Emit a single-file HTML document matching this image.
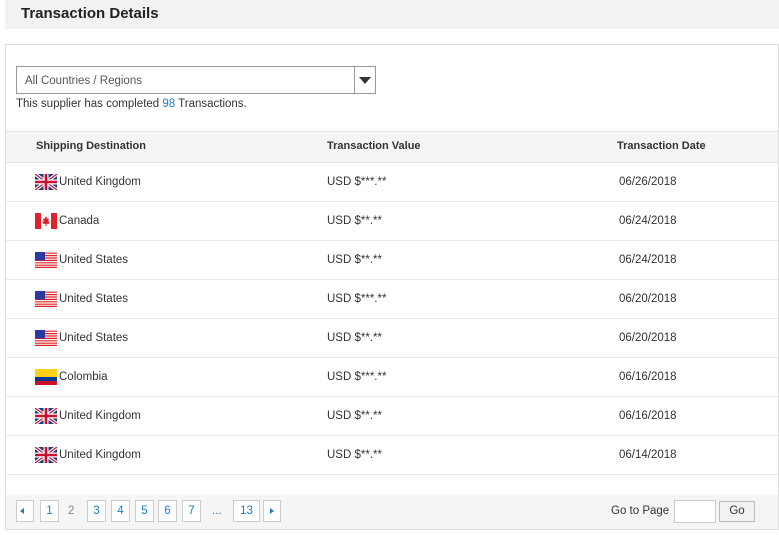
<!DOCTYPE html>
<html><head><meta charset="utf-8"><style>
*{box-sizing:border-box;margin:0;padding:0}
body{width:779px;height:535px;background:#fff;font-family:"Liberation Sans",Arial,sans-serif;font-size:11.5px;line-height:16px;color:#333;position:relative;overflow:hidden}
.top{position:absolute;left:5px;top:0;width:774px;height:29px;background:#f2f2f2}
.top h2{position:absolute;left:16px;top:5px;font-size:15px;line-height:18px;font-weight:bold;color:#222}
.panel{position:absolute;left:5px;top:44px;width:774px;height:486px;border:1px solid #ddd}
.sel{position:absolute;left:16px;top:66px;width:360px;height:28px;border:1px solid #999;background:#fff}
.sel span{position:absolute;left:8px;top:6px;color:#555}
.sel i{position:absolute;right:0;top:0;width:21px;height:26px;border-left:1px solid #999}
.sel i:after{content:"";position:absolute;left:4px;top:10px;border:6px solid transparent;border-top:7px solid #333;border-bottom:0}
.info{position:absolute;left:16px;top:96px}
.blue{color:#1a7dc8}
.th{position:absolute;left:6px;top:131px;width:772px;height:32px;background:#f5f5f5;border-top:1px solid #e3e3e3;border-bottom:1px solid #e3e3e3;font-weight:bold;font-size:11px}
.th span{position:absolute;top:6px}
.row{position:absolute;left:6px;width:772px;height:39px;border-bottom:1px solid #ebebeb}
.row span{position:absolute;top:11px}
.row svg{position:absolute;left:29px;top:11px}
.pg{position:absolute;left:6px;top:495px;width:772px;height:34px;background:#f5f5f5}
.b{position:absolute;top:5px;height:22px;border:1px solid #ccc;background:#fff;color:#1a7dc8;text-align:center;line-height:20px;font-size:11.5px}
.tr{position:absolute;top:12px;width:0;height:0;border:3px solid transparent}
</style></head><body>
<div class="top"><h2>Transaction Details</h2></div>
<div class="panel"></div>
<div class="sel"><span>All Countries / Regions</span><i></i></div>
<div class="info">This supplier has completed <span class="blue">98</span> Transactions.</div>
<div class="th"><span style="left:30px">Shipping Destination</span><span style="left:321px">Transaction Value</span><span style="left:611px">Transaction Date</span></div>

<svg width="0" height="0" style="position:absolute"><defs>
<g id="uk"><rect width="22" height="16" fill="#1f3a7a"/><path d="M0 0L22 16M22 0L0 16" stroke="#fff" stroke-width="3.5"/><path d="M0 0L22 16M22 0L0 16" stroke="#c8102e" stroke-width="1.2"/><path d="M11 0V16M0 8H22" stroke="#fff" stroke-width="5"/><path d="M11 0V16M0 8H22" stroke="#c8102e" stroke-width="2.6"/></g>
<g id="ca"><rect width="22" height="16" fill="#fff"/><rect width="6" height="16" fill="#e0202a"/><rect x="16" width="6" height="16" fill="#e0202a"/><path d="M11 3L12.5 6L14 5.5L13.3 9L15 8.5L13.5 11L11.5 10.8V13H10.5V10.8L8.5 11L7 8.5L8.7 9L8 5.5L9.5 6Z" fill="#e0202a"/></g>
<g id="us"><rect width="22" height="16" fill="#fff"/><path d="M0 1.2H22M0 3.6H22M0 6H22M0 8.4H22M0 10.8H22M0 13.2H22M0 15.4H22" stroke="#d22" stroke-width="1.2"/><rect width="10" height="8.4" fill="#2a3aa0"/></g>
<g id="co"><rect width="22" height="8" fill="#fcd116"/><rect y="8" width="22" height="4" fill="#003893"/><rect y="12" width="22" height="4" fill="#ce1126"/></g>
</defs></svg>

<div class="row" style="top:163px"><svg width="22" height="16"><use href="#uk"/></svg><span style="left:53px">United Kingdom</span><span style="left:321px">USD $***.**</span><span style="left:613px">06/26/2018</span></div>
<div class="row" style="top:202px"><svg width="22" height="16"><use href="#ca"/></svg><span style="left:53px">Canada</span><span style="left:321px">USD $**.**</span><span style="left:613px">06/24/2018</span></div>
<div class="row" style="top:241px"><svg width="22" height="16"><use href="#us"/></svg><span style="left:53px">United States</span><span style="left:321px">USD $**.**</span><span style="left:613px">06/24/2018</span></div>
<div class="row" style="top:280px"><svg width="22" height="16"><use href="#us"/></svg><span style="left:53px">United States</span><span style="left:321px">USD $***.**</span><span style="left:613px">06/20/2018</span></div>
<div class="row" style="top:319px"><svg width="22" height="16"><use href="#us"/></svg><span style="left:53px">United States</span><span style="left:321px">USD $**.**</span><span style="left:613px">06/20/2018</span></div>
<div class="row" style="top:358px"><svg width="22" height="16"><use href="#co"/></svg><span style="left:53px">Colombia</span><span style="left:321px">USD $***.**</span><span style="left:613px">06/16/2018</span></div>
<div class="row" style="top:397px"><svg width="22" height="16"><use href="#uk"/></svg><span style="left:53px">United Kingdom</span><span style="left:321px">USD $**.**</span><span style="left:613px">06/16/2018</span></div>
<div class="row" style="top:436px"><svg width="22" height="16"><use href="#uk"/></svg><span style="left:53px">United Kingdom</span><span style="left:321px">USD $**.**</span><span style="left:613px">06/14/2018</span></div>

<div class="pg">
<div class="b" style="left:10px;width:18px"><i class="tr" style="left:3px;top:7px;border-right:4px solid #1a7dc8;border-left:0"></i></div>
<div class="b" style="left:34px;width:19px">1</div>
<div style="position:absolute;left:62px;top:8px;color:#888">2</div>
<div class="b" style="left:81px;width:19px">3</div>
<div class="b" style="left:105px;width:19px">4</div>
<div class="b" style="left:129px;width:19px">5</div>
<div class="b" style="left:152px;width:19px">6</div>
<div class="b" style="left:176px;width:19px">7</div>
<div style="position:absolute;left:206px;top:8px;color:#1a7dc8">...</div>
<div class="b" style="left:227px;width:27px">13</div>
<div class="b" style="left:257px;width:18px"><i class="tr" style="left:6px;top:7px;border-left:4px solid #1a7dc8;border-right:0"></i></div>
<div style="position:absolute;left:605px;top:8px;color:#333">Go to Page</div>
<div style="position:absolute;left:668px;top:5px;width:42px;height:23px;border:1px solid #ccc;background:#fff"></div>
<div style="position:absolute;left:713px;top:6px;width:36px;height:21px;border:1px solid #bbb;background:#f2f2f2;text-align:center;line-height:19px;color:#333">Go</div>
</div>
</body></html>
